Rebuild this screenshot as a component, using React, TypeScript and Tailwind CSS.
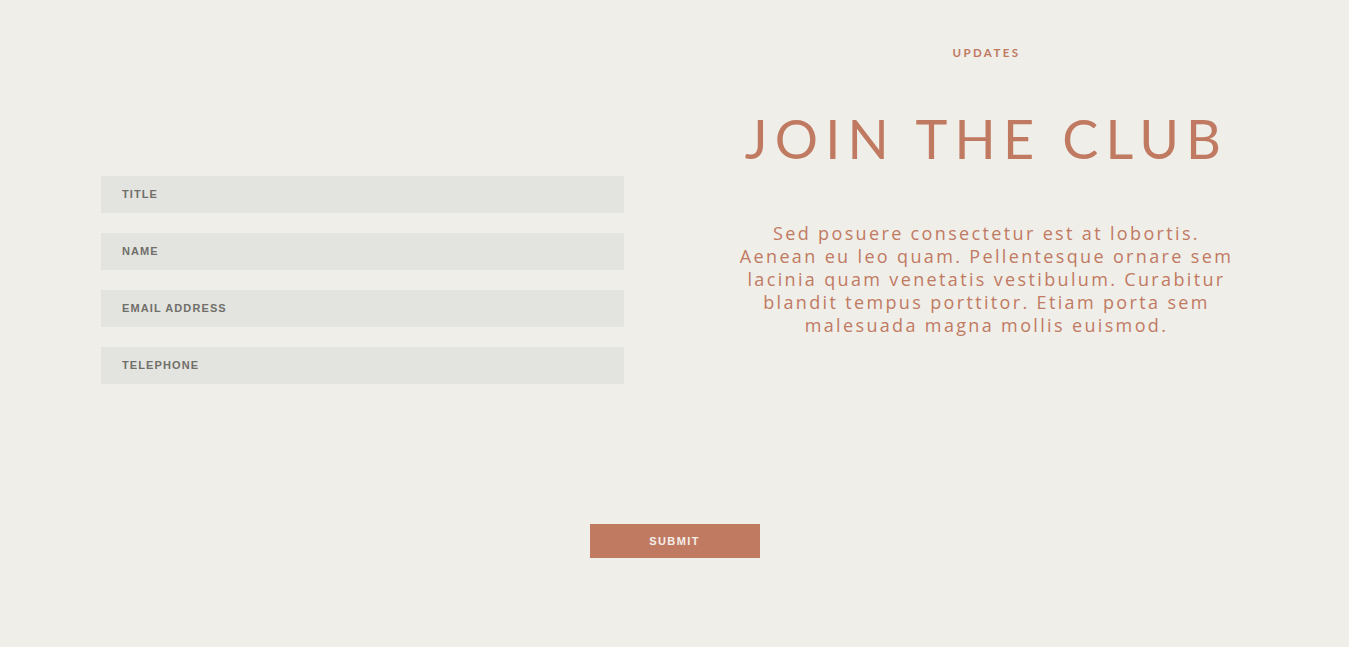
import React from "react";

const fields = ["Title", "Name", "Email Address", "Telephone"];

function Field({ label }: { label: string }) {
  return (
    <input
      type="text"
      placeholder={label.toUpperCase()}
      className="block h-[37px] w-full bg-[#e3e4df] px-[21px] pb-[1px] font-['Liberation_Sans',Arial,sans-serif] text-[11px] font-bold tracking-[1.1px] text-[#706f6a] placeholder:text-[#706f6a] outline-none"
    />
  );
}

export default function App() {
  return (
    <div className="min-h-screen bg-[#efeee9]">
      <div className="grid grid-cols-2 gap-[101px] px-[101px]">
        <div className="flex flex-col gap-5 pt-[176px]">
          {fields.map((f) => (
            <Field key={f} label={f} />
          ))}
        </div>

        <div className="flex flex-col items-center pt-[46px] text-center text-[#c17a62] font-['Lato',sans-serif]">
          <p className="text-[11.5px] font-bold leading-[14px] tracking-[2.4px]">UPDATES</p>
          <h1 className="mt-[46px] text-[54px] font-normal leading-[66px] tracking-[7.2px]">
            JOIN THE CLUB
          </h1>
          <p className="mt-[50px] w-[540px] font-['Open_Sans',sans-serif] text-[18px] leading-[23px] tracking-[2.35px]">
            Sed posuere consectetur est at lobortis.
            <br />
            Aenean eu leo quam. Pellentesque ornare sem
            <br />
            lacinia quam venetatis vestibulum. Curabitur
            <br />
            blandit tempus porttitor. Etiam porta sem
            <br />
            malesuada magna mollis euismod.
          </p>
        </div>
      </div>

      <div className="flex justify-center pt-[140px]">
        <button
          type="submit"
          className="h-[34px] w-[170px] bg-[#c17a62] font-['Liberation_Sans',Arial,sans-serif] text-[11px] font-bold tracking-[1.4px] text-[#f4efe9]"
        >
          SUBMIT
        </button>
      </div>
    </div>
  );
}
